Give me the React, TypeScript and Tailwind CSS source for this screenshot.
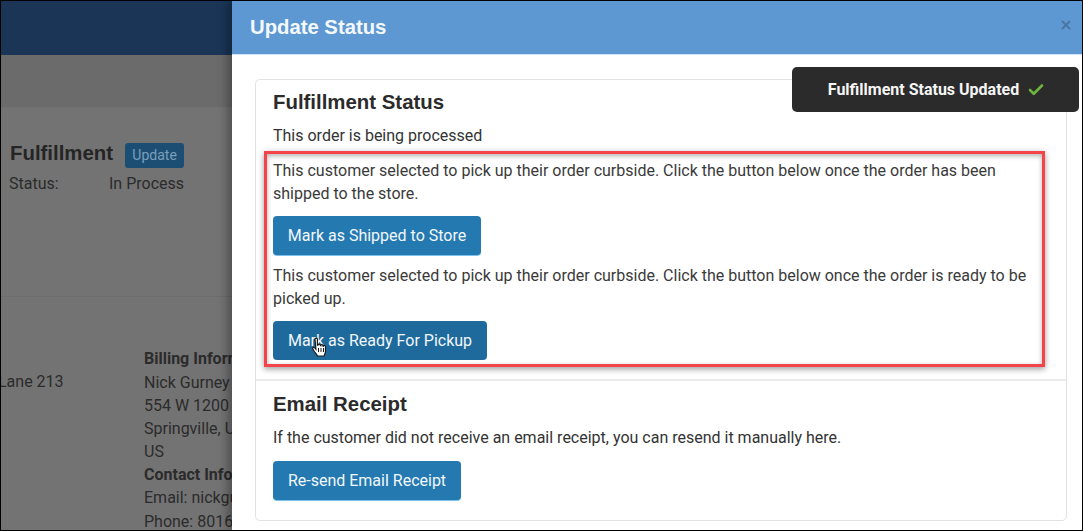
import { Check, X } from 'lucide-react';

const font = { fontFamily: 'Roboto, sans-serif' };

const Button = ({ label, dark, width }: { label: string; dark?: boolean; width: string }) => (
  <button
    className={`block h-[39px] rounded-[4px] text-center text-[16px] text-[#f2f7fb] ${width} ${dark ? 'bg-[#1f6a9c]' : 'bg-[#2479b1] shadow-[0_1px_0_#7cc0ee]'}`}
  >
    {label}
  </button>
);

const Background = () => (
  <div className="w-[231px] shrink-0 bg-[#737373] text-[16px] leading-[23px] text-[#2b2b2b]">
    <div className="h-[54px] bg-[#1a3556]" />
    <div className="h-[52px] bg-[#6b6b6b]" />
    <div className="h-[190px] border-b border-[#6c6c6c] pl-[8px] pt-[33px]">
      <div className="flex h-[28px] items-center">
        <span className="mb-[2px] ml-px font-['Liberation_Sans',sans-serif] text-[20.4px] font-bold leading-[26px] text-[#252525]">
          Fulfillment
        </span>
        <span className="ml-[12px] mt-[2px] flex h-[25px] w-[59px] items-center justify-center rounded-[3px] bg-[#1c4e74] text-sm text-[#7a9fbb]">
          Update
        </span>
      </div>
      <div className="mt-[4px] flex">
        <span className="w-[100px]">Status:</span>
        <span>In Process</span>
      </div>
    </div>
    <div className="flex whitespace-nowrap pt-[50px]">
      <div className="w-[143px] shrink-0 pt-[23px]">
        <span className="-ml-[3px] block">Lane 213</span>
      </div>
      <div className="w-[88px] shrink-0">
        <div className="font-bold">Billing Information</div>
        <div className="mt-px">Nick Gurney</div>
        <div>554 W 1200 N</div>
        <div>Springville, UT</div>
        <div>US</div>
        <div className="font-bold">Contact Information</div>
        <div>Email: nickgurney</div>
        <div className="mt-px">Phone: 8016</div>
      </div>
    </div>
  </div>
);

export default function App() {
  return (
    <div
      style={font}
      className="relative flex h-[531px] w-[1083px] overflow-hidden border border-black bg-white"
    >
      <Background />
      <div className="relative z-10 flex min-w-0 flex-1 flex-col bg-white shadow-[-4px_0_10px_rgba(0,0,0,0.35)]">
        <div className="flex h-[54px] shrink-0 items-center justify-between border-b border-[#cfe3f5] bg-[#5e98d2] pl-[18px] pr-[9px]">
          <h1 className="font-['Liberation_Sans',sans-serif] text-[20.3px] font-bold text-[#f4f8fc]">Update Status</h1>
          <X size={14} strokeWidth={3.5} className="mb-[6px] text-[#4a77a6]" />
        </div>
        <div className="ml-[23px] mr-[15px] mt-[24px] h-[442px] rounded-[5px] border border-[#e2e2e2]">
          <section className="h-[301px] border-b-2 border-[#ebebeb] pl-[17px] pr-[24px] pt-[8px]">
            <h2 className="font-['Liberation_Sans',sans-serif] text-[20.4px] font-bold leading-[28px] text-[#2b2b2b]">
              Fulfillment Status
            </h2>
            <p className="mt-[8px] text-[16px] leading-[23px] text-[#333333]">This order is being processed</p>
            <p className="mt-[12px] text-[16px] leading-[23px] text-[#3a3a3a]">
              This customer selected to pick up their order curbside. Click the button below once the order has been
              shipped to the store.
            </p>
            <div className="mt-[11px]">
              <Button label="Mark as Shipped to Store" width="w-[208px]" />
            </div>
            <p className="mt-[9px] text-[16px] leading-[23px] text-[#3a3a3a]">
              This customer selected to pick up their order curbside. Click the button below once the order is ready to
              be picked up.
            </p>
            <div className="mt-[11px]">
              <Button label="Mark as Ready For Pickup" dark width="w-[214px]" />
            </div>
          </section>
          <section className="px-[17px] pt-[9px]">
            <h2 className="font-['Liberation_Sans',sans-serif] text-[20.4px] font-bold leading-[28px] text-[#2b2b2b]">
              Email Receipt
            </h2>
            <p className="mt-[8px] text-[16px] leading-[23px] text-[#333333]">
              If the customer did not receive an email receipt, you can resend it manually here.
            </p>
            <div className="mt-[12px]">
              <Button label="Re-send Email Receipt" width="w-[188px]" />
            </div>
          </section>
        </div>
      </div>

      {/* red annotation box */}
      <div className="absolute left-[263px] top-[150px] z-20 h-[216px] w-[781px] border-[3px] border-[#f4444a] shadow-[0_2px_6px_rgba(0,0,0,0.4),inset_0_2px_5px_rgba(0,0,0,0.3)]" />

      {/* toast */}
      <div className="absolute left-[791px] top-[66px] z-20 flex h-[45px] w-[287px] items-center justify-center gap-[8px] rounded-[5px] bg-[#2b2b2b] pl-[2px] text-[16px] font-bold text-[#f5f5f5]">
        Fulfillment Status Updated
        <Check size={18} strokeWidth={3.5} className="text-[#6cb33f]" />
      </div>

      {/* hand cursor */}
      <svg className="absolute left-[310px] top-[336px] z-30" width="18" height="21" viewBox="0 0 18 21">
        <path
          d="M4 2.2c0-1.500 2.400-1.500 2.400 0v6l.6 0c0-1.500 2.300-1.500 2.300 0l.4.400c0-1.300 2.200-1.300 2.200.3l.4.300c.2-1.100 2.200-1 2.200.6v4.500c0 2-1 3.200-1.300 4.700H6.500c-.6-1.600-2-3-3.500-5-1.100-1.500-1.800-2.700-1.100-3.400.8-.8 1.800 0 3 1.500L4 2.200z"
          fill="#ffffff"
          stroke="#1a1a1a"
          strokeWidth="1.200"
        />
        <path d="M7.500 11v4M10 11v4M12.500 11v4" stroke="#1a1a1a" strokeWidth="1" />
      </svg>
    </div>
  );
}
